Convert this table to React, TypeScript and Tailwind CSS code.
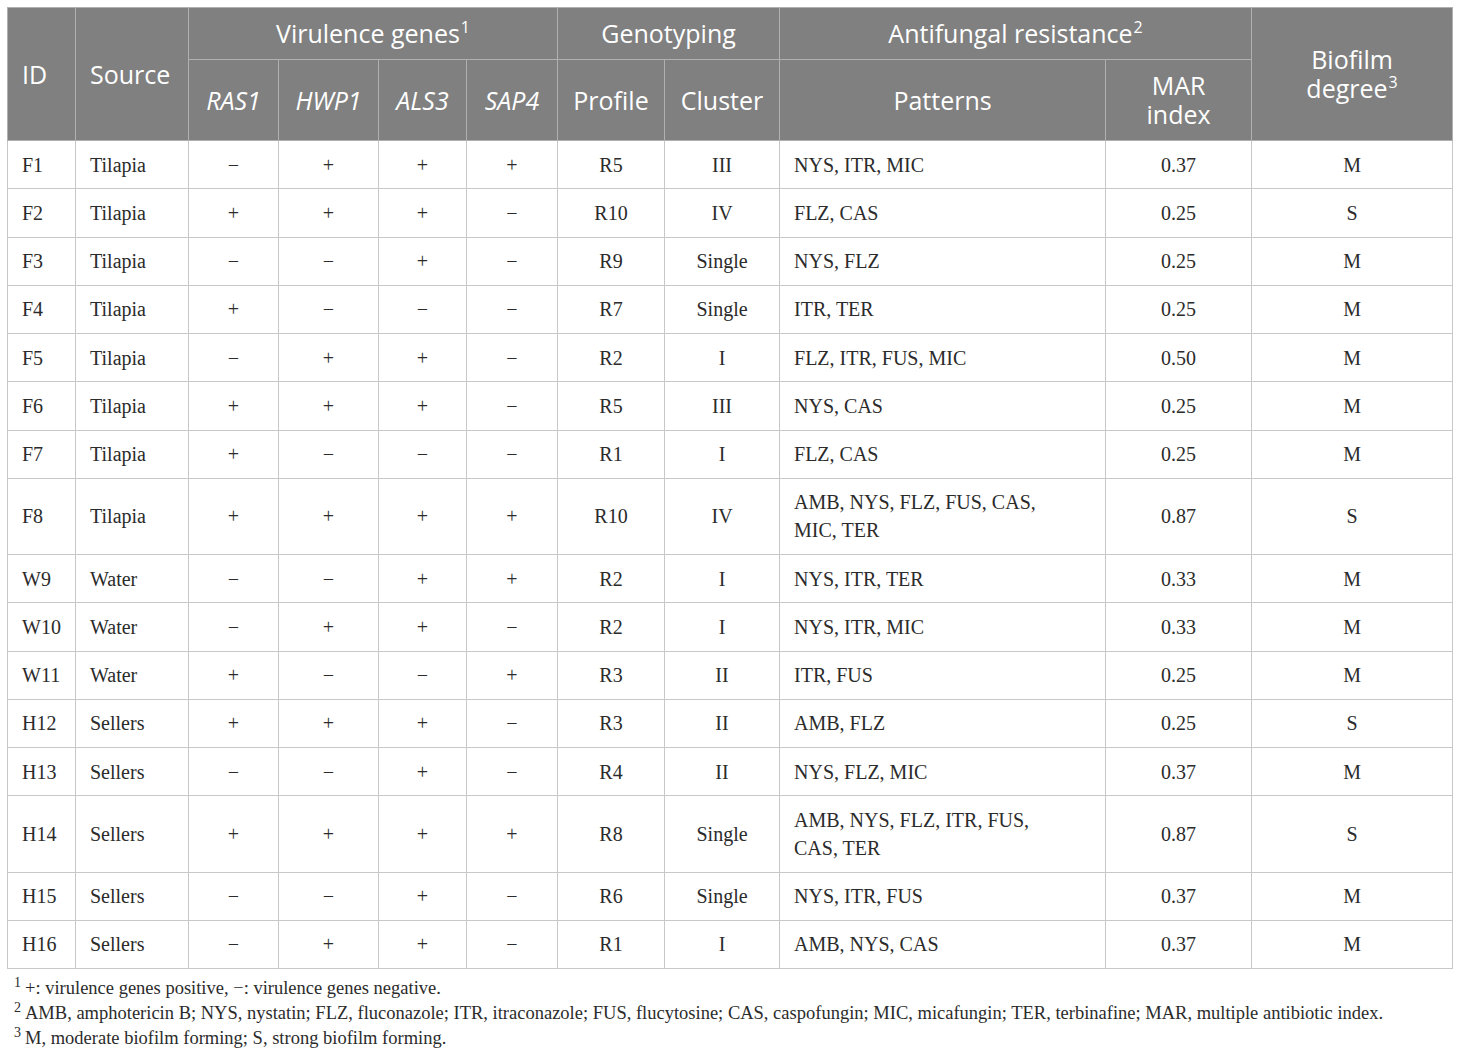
const rows: [string, string, string, string, string, string, string, string, string, string, string][] = [
  ["F1", "Tilapia", "−", "+", "+", "+", "R5", "III", "NYS, ITR, MIC", "0.37", "M"],
  ["F2", "Tilapia", "+", "+", "+", "−", "R10", "IV", "FLZ, CAS", "0.25", "S"],
  ["F3", "Tilapia", "−", "−", "+", "−", "R9", "Single", "NYS, FLZ", "0.25", "M"],
  ["F4", "Tilapia", "+", "−", "−", "−", "R7", "Single", "ITR, TER", "0.25", "M"],
  ["F5", "Tilapia", "−", "+", "+", "−", "R2", "I", "FLZ, ITR, FUS, MIC", "0.50", "M"],
  ["F6", "Tilapia", "+", "+", "+", "−", "R5", "III", "NYS, CAS", "0.25", "M"],
  ["F7", "Tilapia", "+", "−", "−", "−", "R1", "I", "FLZ, CAS", "0.25", "M"],
  ["F8", "Tilapia", "+", "+", "+", "+", "R10", "IV", "AMB, NYS, FLZ, FUS, CAS,\nMIC, TER", "0.87", "S"],
  ["W9", "Water", "−", "−", "+", "+", "R2", "I", "NYS, ITR, TER", "0.33", "M"],
  ["W10", "Water", "−", "+", "+", "−", "R2", "I", "NYS, ITR, MIC", "0.33", "M"],
  ["W11", "Water", "+", "−", "−", "+", "R3", "II", "ITR, FUS", "0.25", "M"],
  ["H12", "Sellers", "+", "+", "+", "−", "R3", "II", "AMB, FLZ", "0.25", "S"],
  ["H13", "Sellers", "−", "−", "+", "−", "R4", "II", "NYS, FLZ, MIC", "0.37", "M"],
  ["H14", "Sellers", "+", "+", "+", "+", "R8", "Single", "AMB, NYS, FLZ, ITR, FUS,\nCAS, TER", "0.87", "S"],
  ["H15", "Sellers", "−", "−", "+", "−", "R6", "Single", "NYS, ITR, FUS", "0.37", "M"],
  ["H16", "Sellers", "−", "+", "+", "−", "R1", "I", "AMB, NYS, CAS", "0.37", "M"],
];

const widths = [68, 113, 90, 100, 88, 91, 107, 115, 326, 146, 201];

const serif = '"Liberation Serif", "Times New Roman", serif';
const th = "border border-[#b0b0b0] font-normal text-white leading-[29px]";
const td = "border border-[#c8c8c8] py-[9.625px] leading-[28px] align-middle";

// header superscript
function Sup({ n }: { n: string }) {
  return <span className="relative -top-[10px] ml-[1px] text-[16px] leading-none">{n}</span>;
}

// footnote marker
function Mark({ n }: { n: string }) {
  return <span className="relative -top-[7px] mr-[4px] text-[14px] leading-none">{n}</span>;
}

export default function App() {
  return (
    <div className="min-h-screen bg-white pl-[7px] pt-[7px] text-[#2b2b2b]">
      <table
        className="table-fixed border-collapse border border-[#c8c8c8] text-[20px]"
        style={{ width: 1445, fontFamily: serif }}
      >
        <colgroup>
          {widths.map((w, i) => (
            <col key={i} style={{ width: w }} />
          ))}
        </colgroup>
        <thead className="bg-[#808080] text-[25px]" style={{ fontFamily: '"Open Sans", sans-serif' }}>
          <tr className="h-[52px]">
            <th rowSpan={2} className={`${th} pl-[14px] text-left`}>ID</th>
            <th rowSpan={2} className={`${th} pl-[14px] text-left`}>Source</th>
            <th colSpan={4} className={th}>
              Virulence genes<Sup n="1" />
            </th>
            <th colSpan={2} className={th}>Genotyping</th>
            <th colSpan={2} className={th}>
              Antifungal resistance<Sup n="2" />
            </th>
            <th rowSpan={2} className={th}>
              Biofilm
              <br />
              degree<Sup n="3" />
            </th>
          </tr>
          <tr className="h-[81px]">
            <th className={`${th} italic`}>RAS1</th>
            <th className={`${th} italic`}>HWP1</th>
            <th className={`${th} italic`}>ALS3</th>
            <th className={`${th} italic`}>SAP4</th>
            <th className={th}>Profile</th>
            <th className={th}>Cluster</th>
            <th className={th}>Patterns</th>
            <th className={th}>
              MAR
              <br />
              index
            </th>
          </tr>
        </thead>
        <tbody>
          {rows.map((r) => (
            <tr key={r[0]}>
              {r.map((c, i) => {
                const left = i === 0 || i === 1 || i === 8;
                return (
                  <td
                    key={i}
                    className={`${td} ${left ? "pl-[14px] text-left" : "text-center"} whitespace-pre-line`}
                  >
                    {c}
                  </td>
                );
              })}
            </tr>
          ))}
        </tbody>
      </table>
      <div className="mt-[7px] pl-[7px] text-[18.5px] leading-[25px]" style={{ fontFamily: serif }}>
        <p>
          <Mark n="1" />+: virulence genes positive, −: virulence genes negative.
        </p>
        <p>
          <Mark n="2" />AMB, amphotericin B; NYS, nystatin; FLZ, fluconazole; ITR, itraconazole; FUS, flucytosine; CAS,
          caspofungin; MIC, micafungin; TER, terbinafine; MAR, multiple antibiotic index.
        </p>
        <p>
          <Mark n="3" />M, moderate biofilm forming; S, strong biofilm forming.
        </p>
      </div>
    </div>
  );
}
